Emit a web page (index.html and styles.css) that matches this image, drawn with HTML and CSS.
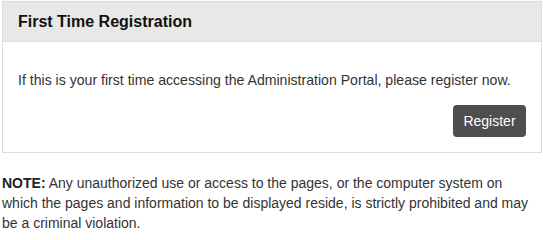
FILE: index.html
```html
<!DOCTYPE html>
<html>
<head>
<meta charset="utf-8">
<link rel="stylesheet" href="styles.css">
</head>
<body>
<div class="page">
  <div class="panel">
    <div class="panel-head">First Time Registration</div>
    <div class="panel-body">
      <p class="intro">If this is your first time accessing the Administration Portal, please register now.</p>
      <div class="actions"><button class="btn">Register</button></div>
    </div>
  </div>
  <p class="note"><b>NOTE:</b> Any unauthorized use or access to the pages, or the computer system on which the pages and information to be displayed reside, is strictly prohibited and may be a criminal violation.</p>
</div>
</body>
</html>
```
FILE: styles.css
```css
html, body { margin: 0; padding: 0; background: #fff; }
body { font-family: "Liberation Sans", Arial, sans-serif; font-size: 14px; color: #333; }
.page { padding: 1px 1px 0 2px; }
.panel { border: 1px solid #dcdcdc; background: #fff; }
.panel-head {
  background: #e8e8e8;
  height: 39px;
  line-height: 39px;
  padding: 0 15px;
  font-size: 16px;
  font-weight: bold;
  color: #111;
  border-bottom: 1px solid #e0e0e0;
}
.panel-body { padding: 28px 15px 15px 15px; }
.intro { margin: 0; line-height: 20px; font-size: 14.1px; }
.actions { display: flex; justify-content: flex-end; margin-top: 15px; }
.btn {
  font-family: "Liberation Sans", Arial, sans-serif;
  font-size: 14px;
  color: #fff;
  background: #4e4e4e;
  border: none;
  border-radius: 4px;
  height: 32px;
  width: 73px;
  padding: 0;
  cursor: pointer;
}
.note { margin: 20px 0 0 0; line-height: 20px; font-size: 14px; color: #333; }
.note b { color: #222; }
```
